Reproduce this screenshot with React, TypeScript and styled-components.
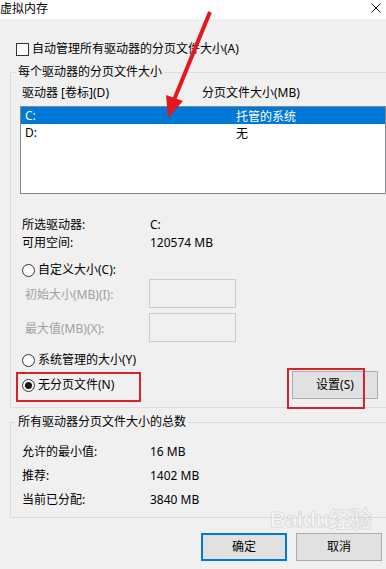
import React from "react";
import styled, { createGlobalStyle } from "styled-components";

const Global = createGlobalStyle`
  html, body { margin: 0; padding: 0; background: #f0f0f0; }
  body { font-family: "Noto Sans", "Noto Sans CJK SC", sans-serif; font-size: 12px; color: #000; }
`;

const Window = styled.div`
  position: relative;
  width: 386px;
  height: 569px;
  background: #f0f0f0;
  overflow: hidden;
`;

const TitleBar = styled.div`
  height: 19px;
  background: #fff;
  display: flex;
  align-items: flex-start;
  justify-content: space-between;
`;

const Title = styled.div`
  font-size: 12px;
  line-height: 14px;
  padding-top: 1px;
  font-family: "Noto Sans CJK SC", sans-serif;
`;

const CloseBtn = styled.div`
  width: 10px;
  height: 10px;
  margin: 3px 5px 0 0;
  display: flex;
`;

const Body = styled.div`
  padding-top: 23px;
  display: flex;
  flex-direction: column;
`;

const Row = styled.div<{ $h?: number }>`
  display: flex;
  align-items: center;
  height: ${(p) => p.$h ?? 14}px;
  line-height: 14px;
  white-space: nowrap;
`;

const CheckRow = styled(Row)`
  padding-left: 16px;
  gap: 3px;
`;

const CheckBox = styled.span`
  width: 11px;
  height: 11px;
  border: 1px solid #333;
  background: #fff;
  flex: none;
`;

const Group = styled.div<{ $mt: number; $pt: number; $pb: number; $pl: number }>`
  position: relative;
  margin: ${(p) => p.$mt}px 0 0 10px;
  width: 366px;
  border: 1px solid #dcdcdc;
  padding: ${(p) => p.$pt}px 0 ${(p) => p.$pb}px ${(p) => p.$pl}px;
  display: flex;
  flex-direction: column;
`;

const Legend = styled.span`
  position: absolute;
  top: -8px;
  left: 5px;
  padding: 0 2px;
  line-height: 14px;
  background: #f0f0f0;
`;

const HeaderRow = styled(Row)`
  padding-left: 2px;
`;

const Col = styled.span<{ $w: number }>`
  width: ${(p) => p.$w}px;
  flex: none;
`;

const ListBox = styled.div`
  margin-top: 6px;
  height: 86px;
  border: 1px solid #828790;
  background: #fff;
  display: flex;
  flex-direction: column;
`;

const ListRow = styled.div<{ $sel?: boolean }>`
  height: 17px;
  display: flex;
  align-items: center;
  padding-left: 4px;
  background: ${(p) => (p.$sel ? "#0078d7" : "transparent")};
  color: ${(p) => (p.$sel ? "#fff" : "#000")};
`;

const InfoRow = styled(Row)<{ $mt: number }>`
  margin-top: ${(p) => p.$mt}px;
  padding-left: 2px;
`;

const Radio = styled.span<{ $on?: boolean }>`
  width: 11px;
  height: 11px;
  border-radius: 50%;
  border: 1px solid #333;
  background: #fff;
  flex: none;
  display: flex;
  align-items: center;
  justify-content: center;
  &::after {
    content: "";
    display: ${(p) => (p.$on ? "block" : "none")};
    width: 7px;
    height: 7px;
    border-radius: 50%;
    background: #1a1a1a;
  }
`;

const RadioRow = styled(Row)<{ $mt: number }>`
  margin-top: ${(p) => p.$mt}px;
  padding-left: 2px;
  gap: 3px;
`;

const InputRow = styled.div<{ $mt: number }>`
  margin-top: ${(p) => p.$mt}px;
  display: flex;
  align-items: center;
  height: 29px;
  padding-left: 5px;
  color: #a0a0a0;
  white-space: nowrap;
`;

const InputBox = styled.div`
  width: 85px;
  height: 27px;
  border: 1px solid #cccccc;
  background: #f0f0f0;
  flex: none;
`;

const BottomRow = styled.div`
  margin-top: 4px;
  height: 28px;
  display: flex;
  align-items: center;
  justify-content: space-between;
  padding: 0 8px 0 2px;
`;

const RadioLabel = styled.span`
  display: flex;
  align-items: center;
  gap: 3px;
  line-height: 14px;
`;

const Button = styled.div<{ $default?: boolean }>`
  width: ${(p) => (p.$default ? 82 : 84)}px;
  height: ${(p) => (p.$default ? 24 : 26)}px;
  border: ${(p) => (p.$default ? "2px solid #0078d7" : "1px solid #adadad")};
  background: #e1e1e1;
  display: flex;
  align-items: center;
  justify-content: center;
  line-height: 14px;
  flex: none;
`;

const ButtonBar = styled.div`
  margin-top: 15px;
  display: flex;
  justify-content: flex-end;
  gap: 9px;
  padding-right: 4px;
`;

const Overlay = styled.svg`
  position: absolute;
  left: 0;
  top: 0;
  pointer-events: none;
`;

const RedBox = styled.div<{ $x: number; $y: number; $w: number; $h: number }>`
  position: absolute;
  left: ${(p) => p.$x}px;
  top: ${(p) => p.$y}px;
  width: ${(p) => p.$w}px;
  height: ${(p) => p.$h}px;
  border: 2px solid #d8222b;
  box-sizing: border-box;
  pointer-events: none;
`;

const Watermark = styled.div`
  position: absolute;
  left: 270px;
  top: 508px;
  font-family: "Liberation Sans", "Noto Sans CJK SC", sans-serif;
  font-size: 22px;
  line-height: 24px;
  font-weight: bold;
  color: rgba(255, 255, 255, 0.55);
  -webkit-text-stroke: 1px rgba(190, 190, 190, 0.45);
  letter-spacing: -0.5px;
  pointer-events: none;
`;

export default function App() {
  return (
    <Window>
      <Global />
      <TitleBar>
        <Title>虚拟内存</Title>
        <CloseBtn>
          <svg width="10" height="10" viewBox="0 0 10 10">
            <path d="M0.5 0.5 L9.5 9.5 M9.5 0.5 L0.5 9.5" stroke="#111" strokeWidth="1" />
          </svg>
        </CloseBtn>
      </TitleBar>
      <Body>
        <CheckRow>
          <CheckBox />
          <span>自动管理所有驱动器的分页文件大小(A)</span>
        </CheckRow>
        <Group $mt={16} $pt={13} $pb={8} $pl={9}>
          <Legend>每个驱动器的分页文件大小</Legend>
          <HeaderRow>
            <Col $w={180}>驱动器 [卷标](D)</Col>
            <span>分页文件大小(MB)</span>
          </HeaderRow>
          <ListBox>
            <ListRow $sel>
              <Col $w={211}>C:</Col>
              <span>托管的系统</span>
            </ListRow>
            <ListRow>
              <Col $w={211}>D:</Col>
              <span>无</span>
            </ListRow>
          </ListBox>
          <InfoRow $mt={24}>
            <Col $w={128}>所选驱动器:</Col>
            <span>C:</span>
          </InfoRow>
          <InfoRow $mt={4}>
            <Col $w={128}>可用空间:</Col>
            <span>120574 MB</span>
          </InfoRow>
          <RadioRow $mt={13}>
            <Radio />
            <span>自定义大小(C):</span>
          </RadioRow>
          <InputRow $mt={2}>
            <Col $w={124}>初始大小(MB)(I):</Col>
            <InputBox />
          </InputRow>
          <InputRow $mt={5}>
            <Col $w={124}>最大值(MB)(X):</Col>
            <InputBox />
          </InputRow>
          <RadioRow $mt={11}>
            <Radio />
            <span>系统管理的大小(Y)</span>
          </RadioRow>
          <BottomRow>
            <RadioLabel>
              <Radio $on />
              <span>无分页文件(N)</span>
            </RadioLabel>
            <Button>设置(S)</Button>
          </BottomRow>
        </Group>
        <Group $mt={14} $pt={22} $pb={10} $pl={9}>
          <Legend>所有驱动器分页文件大小的总数</Legend>
          <InfoRow $mt={0}>
            <Col $w={128}>允许的最小值:</Col>
            <span>16 MB</span>
          </InfoRow>
          <InfoRow $mt={10}>
            <Col $w={128}>推荐:</Col>
            <span>1402 MB</span>
          </InfoRow>
          <InfoRow $mt={10}>
            <Col $w={128}>当前已分配:</Col>
            <span>3840 MB</span>
          </InfoRow>
        </Group>
        <ButtonBar>
          <Button $default>确定</Button>
          <Button>取消</Button>
        </ButtonBar>
      </Body>
      <Watermark>Baidu经验</Watermark>
      <RedBox $x={16} $y={372} $w={125} $h={30} />
      <RedBox $x={287} $y={368} $w={78} $h={41} />
      <Overlay width="386" height="569" viewBox="0 0 386 569">
        <line x1="210" y1="12" x2="174" y2="100" stroke="#e3171f" strokeWidth="4" />
        <polygon points="168,118 183,101 166,95" fill="#e3171f" />
      </Overlay>
    </Window>
  );
}
